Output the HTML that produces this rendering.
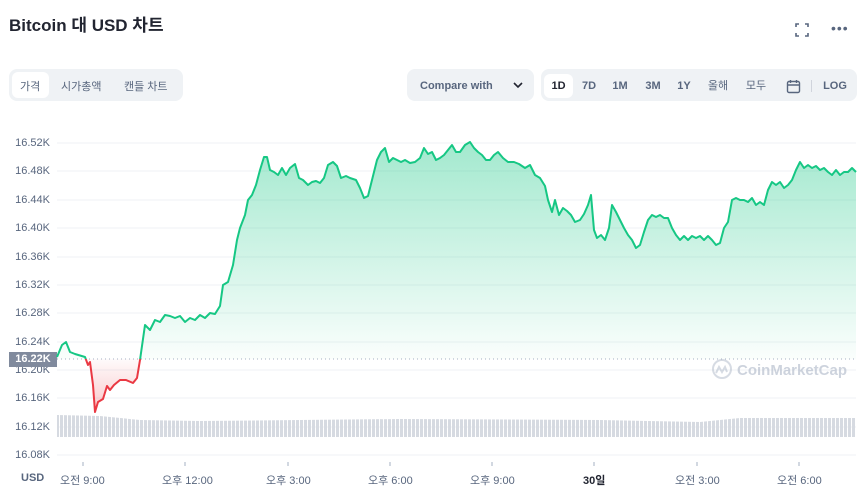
<!DOCTYPE html>
<html><head><meta charset="utf-8"><style>
body{margin:0;width:860px;height:487px;background:#fff;font-family:"Liberation Sans","Noto Sans CJK KR",sans-serif;position:relative;overflow:hidden;color:#222531}
.a{position:absolute}
.t{font-size:11px;color:#58667e;text-align:right;width:46px;left:4px}
.x{font-size:11px;color:#58667e;top:472px}
.seg{background:#eff2f5;border-radius:8px;height:32px}
.b{position:absolute;top:5px;height:24px;line-height:24px;font-size:11px;font-weight:bold;color:#58667e;text-align:center;border-radius:6px}
</style></head><body>
<div class="a" style="left:9px;top:11px;font-size:17px;font-weight:bold">Bitcoin 대 USD 차트</div>
<svg class="a" style="left:794px;top:22px" width="16" height="16" viewBox="0 0 16 16" fill="none" stroke="#58667e" stroke-width="1.6"><path d="M2 5V2h3M11 2h3v3M14 11v3h-3M5 14H2v-3"/></svg>
<div class="a" style="left:831px;top:20px;font-size:14px;color:#58667e;letter-spacing:1px">•••</div>

<div class="a seg" style="left:9px;top:69px;width:174px"></div>
<div class="a" style="left:12px;top:72px;width:37px;height:26px;background:#fff;border-radius:6px"></div>
<div class="a" style="left:20px;top:78px;font-size:11px;color:#58667e">가격</div>
<div class="a" style="left:61px;top:78px;font-size:11px;color:#58667e">시가총액</div>
<div class="a" style="left:124px;top:78px;font-size:11px;color:#58667e">캔들 차트</div>

<div class="a seg" style="left:407px;top:69px;width:127px"></div>
<div class="a" style="left:420px;top:80px;font-size:11px;font-weight:bold;color:#58667e">Compare with</div>
<svg class="a" style="left:513px;top:81px" width="10" height="8" viewBox="0 0 10 8" fill="none" stroke="#222531" stroke-width="1.6"><path d="M1 2l4 4 4-4"/></svg>

<div class="a seg" style="left:541px;top:69px;width:316px"></div>
<div class="b" style="left:544px;top:74px;width:29px;background:#fff;color:#222531">1D</div>
<div class="b" style="left:577px;top:74px;width:24px">7D</div>
<div class="b" style="left:607px;top:74px;width:26px">1M</div>
<div class="b" style="left:639px;top:74px;width:28px">3M</div>
<div class="b" style="left:672px;top:74px;width:24px">1Y</div>
<div class="b" style="left:702px;top:74px;width:32px;font-weight:normal">올해</div>
<div class="b" style="left:740px;top:74px;width:32px;font-weight:normal">모두</div>
<svg class="a" style="left:786px;top:79px" width="15" height="15" viewBox="0 0 15 15" fill="none" stroke="#58667e" stroke-width="1.4"><rect x="1.5" y="2.5" width="12" height="11" rx="1.5"/><path d="M1.5 6h12M4.5 1v3M10.5 1v3"/></svg>
<div class="a" style="left:811px;top:80px;width:1px;height:12px;background:#d0d4dc"></div>
<div class="b" style="left:819px;top:74px;width:32px">LOG</div>

<div class="t a" style="top:137px">16.52K</div>
<div class="t a" style="top:165px">16.48K</div>
<div class="t a" style="top:194px">16.44K</div>
<div class="t a" style="top:222px">16.40K</div>
<div class="t a" style="top:251px">16.36K</div>
<div class="t a" style="top:279px">16.32K</div>
<div class="t a" style="top:307px">16.28K</div>
<div class="t a" style="top:336px">16.24K</div>
<div class="t a" style="top:364px">16.20K</div>
<div class="t a" style="top:392px">16.16K</div>
<div class="t a" style="top:421px">16.12K</div>
<div class="t a" style="top:449px">16.08K</div>
<div class="a" style="left:9px;top:352px;width:48px;height:15px;background:#808a9d;color:#fff;font-size:11px;font-weight:bold;line-height:15px;text-align:center">16.22K</div>

<svg class="a" style="left:0;top:0" width="860" height="487">
<defs>
<linearGradient id="g" x1="0" y1="140" x2="0" y2="359" gradientUnits="userSpaceOnUse"><stop offset="0" stop-color="#16c784" stop-opacity=".4"/><stop offset="1" stop-color="#16c784" stop-opacity="0.02"/></linearGradient>
<linearGradient id="r" x1="0" y1="359" x2="0" y2="415" gradientUnits="userSpaceOnUse"><stop offset="0" stop-color="#ea3943" stop-opacity="0.02"/><stop offset="1" stop-color="#ea3943" stop-opacity=".3"/></linearGradient>
<clipPath id="up"><rect x="0" y="0" width="860" height="359"/></clipPath>
<clipPath id="dn"><rect x="0" y="359" width="860" height="130"/></clipPath>
<pattern id="vb" width="4" height="30" patternUnits="userSpaceOnUse"><rect width="3" height="30" fill="#d6dae1"/></pattern>
</defs>
<g stroke="#eff2f5" stroke-width="1">
<path d="M57 143H856M57 171H856M57 200H856M57 228H856M57 257H856M57 285H856M57 313H856M57 342H856M57 370H856M57 398H856M57 427H856M57 455H856"/>
</g>
<path d="M57 415L100 416L140 420L200 421L300 420L400 419L600 420L700 422L740 418L856 418V437H57Z" fill="url(#vb)"/>
<line x1="57" y1="359" x2="856" y2="359" stroke="#a6b0c3" stroke-dasharray="1 3"/>
<g stroke="#a6b0c3"><path d="M83 462v4M185 462v4M288 462v4M390 462v4M492 462v4M594 462v4M697 462v4M799 462v4"/></g>
<g id="P">
<polygon clip-path="url(#up)" fill="url(#g)" points="57,359 57,357 62,345 66,342 70,352 75,354 85,357 88,365 90,362 93,385 95,412 98,402 103,399 107,386 110,390 114,385 120,380 126,380 133,383 137,378 140,360 145,325 150,330 155,320 160,322 165,315 170,316 175,318 180,316 185,322 190,318 195,320 200,315 205,318 210,313 215,314 220,306 223,285 228,282 233,265 237,240 240,228 245,215 248,200 252,195 256,185 260,170 264,157 267,157 270,170 274,172 278,175 282,168 286,175 290,168 295,164 299,178 303,180 308,185 312,182 316,181 320,183 324,178 328,165 333,162 337,166 341,178 346,176 350,178 356,180 360,188 364,198 368,196 372,180 377,160 381,152 385,148 389,162 393,158 397,160 401,162 405,160 410,163 415,162 420,158 424,148 428,154 432,152 436,160 440,158 444,155 448,150 452,145 456,152 460,152 465,145 470,142 474,148 478,152 482,155 486,160 490,160 494,155 498,152 503,158 508,162 514,162 519,164 525,168 530,165 535,175 540,178 545,186 548,200 552,212 555,200 559,215 563,208 567,211 571,215 575,222 580,220 584,214 588,205 591,195 594,230 597,238 601,235 605,240 609,228 612,205 616,212 620,220 624,228 628,235 632,240 636,248 640,245 644,232 648,220 652,215 656,217 660,215 664,218 668,218 672,228 676,235 680,240 684,236 688,240 692,236 696,238 700,236 704,240 708,236 712,240 716,245 720,243 724,228 728,222 732,200 736,198 740,200 744,200 748,202 752,198 756,205 760,202 764,205 768,190 772,182 776,185 780,182 784,188 788,185 792,180 796,170 800,162 804,168 808,165 812,168 816,166 820,170 824,168 828,172 832,175 836,170 840,175 844,172 848,172 852,168 856,172 856,359"/>
<polygon clip-path="url(#dn)" fill="url(#r)" points="57,359 85,357 88,365 90,362 93,385 95,412 98,402 103,399 107,386 110,390 114,385 120,380 126,380 133,383 137,378 140,360 141,359"/>
</g>
<polyline clip-path="url(#up)" fill="none" stroke="#16c784" stroke-width="2" stroke-linejoin="round" points="57,357 62,345 66,342 70,352 75,354 85,357 88,365 90,362 93,385 95,412 98,402 103,399 107,386 110,390 114,385 120,380 126,380 133,383 137,378 140,360 145,325 150,330 155,320 160,322 165,315 170,316 175,318 180,316 185,322 190,318 195,320 200,315 205,318 210,313 215,314 220,306 223,285 228,282 233,265 237,240 240,228 245,215 248,200 252,195 256,185 260,170 264,157 267,157 270,170 274,172 278,175 282,168 286,175 290,168 295,164 299,178 303,180 308,185 312,182 316,181 320,183 324,178 328,165 333,162 337,166 341,178 346,176 350,178 356,180 360,188 364,198 368,196 372,180 377,160 381,152 385,148 389,162 393,158 397,160 401,162 405,160 410,163 415,162 420,158 424,148 428,154 432,152 436,160 440,158 444,155 448,150 452,145 456,152 460,152 465,145 470,142 474,148 478,152 482,155 486,160 490,160 494,155 498,152 503,158 508,162 514,162 519,164 525,168 530,165 535,175 540,178 545,186 548,200 552,212 555,200 559,215 563,208 567,211 571,215 575,222 580,220 584,214 588,205 591,195 594,230 597,238 601,235 605,240 609,228 612,205 616,212 620,220 624,228 628,235 632,240 636,248 640,245 644,232 648,220 652,215 656,217 660,215 664,218 668,218 672,228 676,235 680,240 684,236 688,240 692,236 696,238 700,236 704,240 708,236 712,240 716,245 720,243 724,228 728,222 732,200 736,198 740,200 744,200 748,202 752,198 756,205 760,202 764,205 768,190 772,182 776,185 780,182 784,188 788,185 792,180 796,170 800,162 804,168 808,165 812,168 816,166 820,170 824,168 828,172 832,175 836,170 840,175 844,172 848,172 852,168 856,172"/>
<polyline clip-path="url(#dn)" fill="none" stroke="#ea3943" stroke-width="2" stroke-linejoin="round" points="85,357 88,365 90,362 93,385 95,412 98,402 103,399 107,386 110,390 114,385 120,380 126,380 133,383 137,378 140,360 145,325"/>
<g opacity=".45" fill="none" stroke="#a6b0c3" stroke-width="2"><circle cx="722" cy="369" r="9"/><path d="M716 373l3-6 3 5 3-5 2 5"/></g>
<text x="737" y="375" font-family="Liberation Sans,sans-serif" font-size="15" font-weight="bold" fill="#a6b0c3" opacity=".55">CoinMarketCap</text>
</svg>

<div class="a" style="left:21px;top:472px;font-size:11px;font-weight:bold;color:#58667e">USD</div>
<div class="a x" style="left:60px">오전 9:00</div>
<div class="a x" style="left:162px">오후 12:00</div>
<div class="a x" style="left:266px">오후 3:00</div>
<div class="a x" style="left:368px">오후 6:00</div>
<div class="a x" style="left:470px">오후 9:00</div>
<div class="a x" style="left:583px;font-weight:bold;color:#222531">30일</div>
<div class="a x" style="left:675px">오전 3:00</div>
<div class="a x" style="left:777px">오전 6:00</div>
</body></html>
